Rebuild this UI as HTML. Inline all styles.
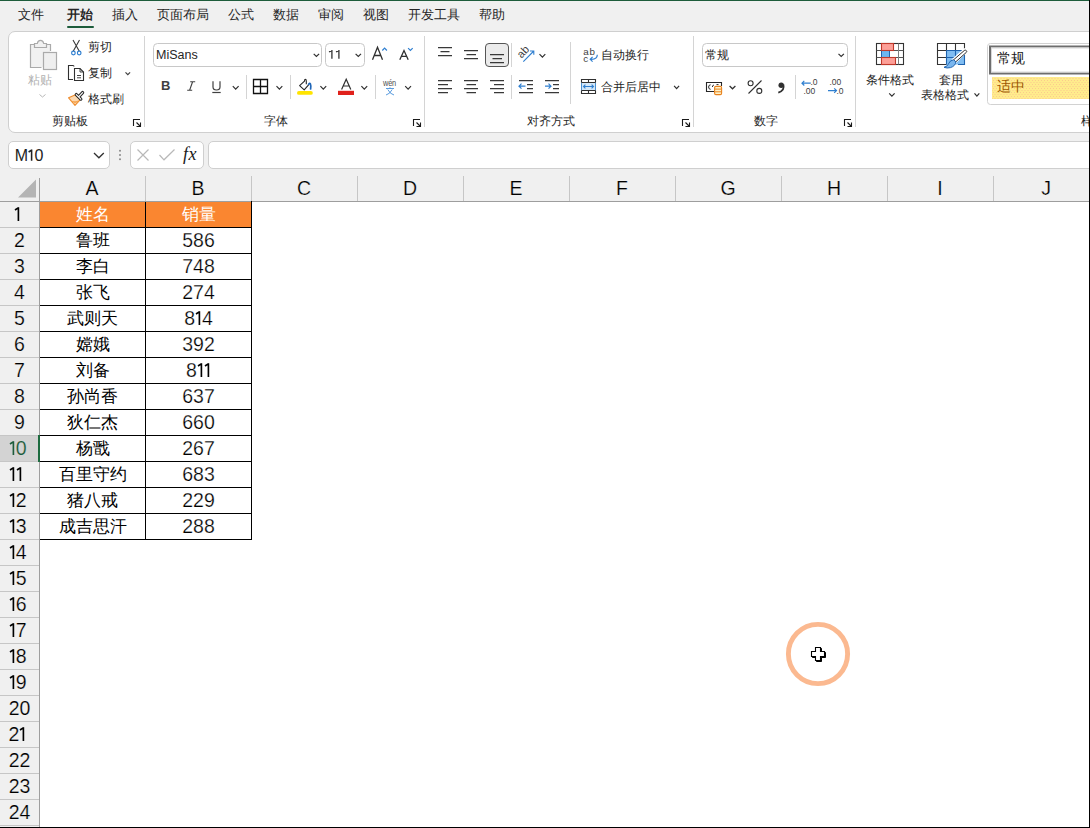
<!DOCTYPE html>
<html><head><meta charset="utf-8">
<style>
*{margin:0;padding:0;box-sizing:border-box}
html,body{width:1090px;height:828px;overflow:hidden;background:#f0f0f0;font-family:"Liberation Sans",sans-serif;color:#262626;position:relative}
.a{position:absolute}
.tab{position:absolute;top:6px;font-size:12.8px;line-height:18px;color:#262626;white-space:nowrap}
#ribbon{position:absolute;left:8px;top:31px;width:1100px;height:102px;background:#fff;border:1px solid #cfcfcf;border-radius:7px}
.t{position:absolute;font-size:12.2px;line-height:14px;white-space:nowrap;color:#262626}
.sep{position:absolute;width:1px;background:#d6d6d6}
.box{position:absolute;background:#fff;border:1px solid #c8c8c8;border-radius:4px}
.chev{position:absolute;width:5px;height:5px;border-right:1.2px solid #444;border-bottom:1.2px solid #444;transform:rotate(45deg)}
.colh{position:absolute;top:176px;height:25px;font-size:19.5px;line-height:24px;text-align:center;color:#000;-webkit-text-stroke:0.2px #f0f0f0}
.rowh{position:absolute;left:0;width:39px;height:25px;font-size:19.5px;line-height:24px;text-align:center;color:#000;-webkit-text-stroke:0.2px #f0f0f0}
.rowh.sel{background:#d3d3d3;color:#1d5c3b}
.hdr{position:absolute;height:25px;font-size:17px;line-height:25px;text-align:center;color:#fff}
.cv{position:absolute;height:25px;font-size:17px;line-height:25px;text-align:center;color:#000}
.num{font-size:19.5px;line-height:24px;-webkit-text-stroke:0.25px #fff}

.dg{position:absolute;height:25px;font-size:19.5px;line-height:24px;color:#000;-webkit-text-stroke:0.2px #f0f0f0;white-space:nowrap}
.dg.sel{color:#1d5c3b;-webkit-text-stroke:0.2px #d3d3d3}
.dgv{position:absolute;height:25px;font-size:19.5px;line-height:24px;color:#000;-webkit-text-stroke:0.25px #fff;white-space:nowrap}

</style></head><body>
<div class="a" style="left:0;top:0;width:1090px;height:1px;background:#1d5c3b"></div>
<div class="tab" style="left:18px">文件</div>
<div class="tab" style="left:67px;font-weight:bold">开始</div>
<div class="a" style="left:67px;top:26px;width:27px;height:2px;background:#1d5c3b;border-radius:1px"></div>
<div class="tab" style="left:112px">插入</div>
<div class="tab" style="left:157px">页面布局</div>
<div class="tab" style="left:228px">公式</div>
<div class="tab" style="left:273px">数据</div>
<div class="tab" style="left:318px">审阅</div>
<div class="tab" style="left:363px">视图</div>
<div class="tab" style="left:408px">开发工具</div>
<div class="tab" style="left:479px">帮助</div>
<div id="ribbon"></div>
<svg class="a" style="left:0;top:0" width="1090" height="176" fill="none" stroke-linecap="butt">
<!-- separators -->
<g stroke="#d4d4d4" stroke-width="1">
<path d="M144.5 36V127M424.5 36V127M693.5 36V127M855.5 36V127"/>
<path d="M246.5 75V99M290.5 75V99M375.5 75V99"/>
<path d="M511.5 43V67M511.5 75V99M570.5 42V104"/>
<path d="M795.5 75V99"/>
</g>
<!-- launchers -->
<g stroke="#1a1a1a" stroke-width="1.1">
<path id="ln" d="M413.5 126V119.5H420M416.5 122.5L420.5 126.5M420.5 122.5V126.5H416.5"/>
<use href="#ln" x="-280"/><use href="#ln" x="269"/><use href="#ln" x="431"/>
</g>
<!-- paste -->
<g stroke="#aaaaaa" stroke-width="1.2">
<rect x="31" y="45" width="19" height="22" fill="#f1f1f1" stroke="none"/>
<path d="M41.5 67.5H30.5V44.5H50.5V51"/>
<path d="M34.5 47.5V43.5H37.3Q37.8 40.3 40.5 40.3Q43.2 40.3 43.7 43.5H46.5V47.5Z" fill="#f1f1f1"/>
<rect x="43.5" y="52.5" width="13" height="17" fill="#efefef"/>
<path d="M39.5 94.5L42.5 97L45.5 94.5" stroke="#b8b8b8" stroke-width="1"/>
</g>
<!-- scissors -->
<path d="M73 40L79.3 51.3M79.5 40L73.2 51.3" stroke="#3a3a3a" stroke-width="1.1"/>
<circle cx="73.4" cy="53" r="1.8" stroke="#2f7fd0" stroke-width="1.2" fill="#fff"/>
<circle cx="79.2" cy="53" r="1.8" stroke="#2f7fd0" stroke-width="1.2" fill="#fff"/>
<!-- copy -->
<g stroke="#303030" stroke-width="1.1">
<path d="M74 66.5Q74 65.5 73 65.5H68.5V79.5H73"/>
<path d="M74.5 68.5H80L83.5 72V80.5H74.5Z" fill="#fff"/>
<path d="M80 68.5V72H83.5" stroke-width="0.9"/>
<path d="M77 75.5H81M77 77.8H81" stroke-width="0.9"/>
<path d="M125.5 72.3L127.8 74.6L130.1 72.3" stroke="#404040" stroke-width="1.2"/>
</g>
<!-- format painter -->
<path d="M75.5 94.8L68.6 97.8L75 105.3L80.3 99.6Z" fill="#fdd9b0" stroke="#ee8b2c" stroke-width="1.1" stroke-linejoin="round"/>
<path d="M71.5 101.5L78 102M73 103.5L78.5 100.8" stroke="#f6a24a" stroke-width="1"/>
<path d="M76.3 94.6L80.8 99.1M78.6 96.8L82.6 92.6" stroke="#2a2a2a" stroke-width="3.3" stroke-linecap="round"/>
<path d="M76.3 94.6L80.8 99.1M78.6 96.8L82.6 92.6" stroke="#fff" stroke-width="1.2" stroke-linecap="round"/>
<!-- font box -->
<rect x="153.5" y="43.5" width="168" height="23" rx="4" fill="#fff" stroke="#c8c8c8"/>
<rect x="325.5" y="43.5" width="39" height="23" rx="4" fill="#fff" stroke="#c8c8c8"/>
<g stroke="#303030" stroke-width="1.2">
<path d="M313.7 53.8L316.4 56.5L319.1 53.8"/>
<path d="M355.6 53.8L358.3 56.5L361 53.8"/>
<path d="M232.8 86.2L235.7 89.1L238.6 86.2"/>
<path d="M276.5 86.2L279.4 89.1L282.3 86.2"/>
<path d="M320.4 86.2L323.3 89.1L326.2 86.2"/>
<path d="M361.4 86.2L364.3 89.1L367.2 86.2"/>
<path d="M405.2 86.2L408.1 89.1L411 86.2"/>
<path d="M539.5 54.2L542.4 57.1L545.3 54.2"/>
<path d="M674.1 85.8L676.6 88.6L679.1 85.8"/>
<path d="M729.6 86L732.5 88.8L735.4 86"/>
<path d="M889.2 93.3L891.9 96.1L894.6 93.3"/>
<path d="M974.5 93.3L976.9 96.1L979.3 93.3"/>
</g>
<!-- A grow/shrink -->
<path d="M372.5 59.8L377.5 47.3L382.5 59.8M374.2 55.5H380.8" stroke="#303030" stroke-width="1.3"/>
<path d="M382.3 50.5L384.6 48.2L386.9 50.5" stroke="#2f7fd0" stroke-width="1.2"/>
<path d="M399.8 59.8L404 50.5L408.2 59.8M401.3 56.3H406.7" stroke="#303030" stroke-width="1.3"/>
<path d="M408.1 48.2L410.4 50.5L412.7 48.2" stroke="#2f7fd0" stroke-width="1.2"/>
<path d="M192.6 81.8L189.6 90.3M190.2 81.8H195.2M187.2 90.3H192.2" stroke="#404040" stroke-width="1.1"/>
<!-- U underline -->
<path d="M213 81.3V87Q213 90 216.5 90Q220 90 220 87V81.3" stroke="#404040" stroke-width="1.2"/>
<path d="M212.3 92.5H220.7" stroke="#404040" stroke-width="1.2"/>
<!-- border icon -->
<path d="M253.5 79.5H267.5V93.5H253.5ZM260.5 79.5V93.5M253.5 86.5H267.5" stroke="#111" stroke-width="1.3"/>
<!-- fill color -->
<path d="M306.3 84.3V81Q306.3 79.4 305.4 79.4Q304.5 79.4 304.5 81V81.2L299.6 85.6L304.2 89.8L308.6 84.8" stroke="#262626" stroke-width="1.1" fill="#fff" stroke-linejoin="round"/>
<path d="M308.6 84.3Q309.6 82.4 310.4 84Q311.2 85.8 310.6 89" stroke="#1f66b8" stroke-width="1.7" stroke-linecap="round"/>
<rect x="297" y="91" width="15.8" height="3.8" rx="1.9" fill="#ffe400"/>
<!-- font color -->
<path d="M341.6 89.5L346.2 79.2L350.8 89.5M343.2 86H349.2" stroke="#303030" stroke-width="1.2"/>
<rect x="338" y="90.8" width="16" height="4.2" fill="#e0211b"/>
<!-- pinyin -->
<path d="M386 88.5H394M390 87.3V88.5M387.8 89.5Q390 94 394 95M392.2 89.5Q390 94 386 95" stroke="#3d8ad8" stroke-width="0.85"/>
<!-- align top/middle/bottom -->
<g stroke="#383838" stroke-width="1.25">
<path d="M438 47.5H452M440.5 51.5H449.5M438 55.5H452"/>
<path d="M464 50.5H478M466.5 54.5H476M464 58.5H478"/>
<rect x="485.5" y="43.5" width="23" height="23" rx="3.5" fill="#ebebeb" stroke="#555" stroke-width="1"/>
<path d="M490 54.5H504M492.5 58.5H502M490 62.5H504"/>
<path d="M438 80.5H452M438 84.5H448M438 88.5H452M438 92.5H448"/>
<path d="M464 80.5H478M466.5 84.5H476M464 88.5H478M466.5 92.5H476"/>
<path d="M490 80.5H504M494 84.5H504M490 88.5H504M494 92.5H504"/>
<path d="M519 80.5H533M527 84.5H533M527 88.5H533M519 92.5H533"/>
<path d="M545 80.5H559M553 84.5H559M553 88.5H559M545 92.5H559"/>
</g>
<g stroke="#2f7fd0" stroke-width="1.2">
<path d="M519 86.2H525.5M521.5 83.7L519 86.2L521.5 88.7"/>
<path d="M545 86.2H551M548.5 83.7L551 86.2L548.5 88.7"/>
<path d="M523.3 61.6L533.8 51M530 51H533.8V54.8" stroke-width="1.1"/>
</g>
<!-- wrap text arrow -->
<path d="M597.3 54.8Q597.3 59.3 591.5 59.3H590.3M592.6 56.9L590.2 59.3L592.6 61.7" stroke="#2f7fd0" stroke-width="1.2"/>
<!-- merge icon -->
<rect x="582" y="82.5" width="13" height="8" fill="#d3e7f8"/>
<path d="M581.5 82.5V90.5M595.5 82.5V90.5" stroke="#4a90d0" stroke-width="1"/>
<path d="M581.5 82.5V79.5H595.5V82.5M581.5 90.5V93.5H595.5V90.5M581.5 82.5H595.5M581.5 90.5H595.5M588.5 79.5V82.5M588.5 90.5V93.5" stroke="#303030" stroke-width="1.1"/>
<path d="M583.5 86.5H593.5M585.4 84.6L583.5 86.5L585.4 88.4M591.6 84.6L593.5 86.5L591.6 88.4" stroke="#2f7fd0" stroke-width="1.1"/>
<!-- number format box -->
<rect x="702.5" y="43.5" width="145" height="23" rx="4" fill="#fff" stroke="#c8c8c8"/>
<path d="M838.5 53.8L841.2 56.5L843.9 53.8" stroke="#303030" stroke-width="1.2"/>
<!-- accounting -->
<path d="M714 91.5H706.5V82.5H721.5V86" stroke="#262626" stroke-width="1.1"/>
<path d="M710.6 84.8Q708.6 84.8 708.6 87Q708.6 89.3 710.6 89.3M713.9 85Q712.4 85.2 712.4 87M716.5 84.6H718.5" stroke="#262626" stroke-width="1"/>
<rect x="714.6" y="86.4" width="7" height="8.2" rx="1.3" fill="#fff3c8" stroke="#e8821e" stroke-width="1.1"/>
<path d="M714.6 89.1H721.6M714.6 91.8H721.6" stroke="#e8821e" stroke-width="1"/>
<!-- percent -->
<circle cx="750.6" cy="83.2" r="2.5" stroke="#303030" stroke-width="1.1"/>
<circle cx="759.3" cy="90.9" r="2.5" stroke="#303030" stroke-width="1.1"/>
<path d="M748.5 93.5L761.5 80.5" stroke="#303030" stroke-width="1.1"/>
<!-- comma -->
<circle cx="781.2" cy="85.3" r="2.7" fill="#303030"/>
<path d="M783.4 84.5Q785 90.5 778.3 92.6" stroke="#303030" stroke-width="1.7"/>
<!-- decimals arrows -->
<path d="M802 83.2H810.8M804.3 80.9L802 83.2L804.3 85.5" stroke="#2f7fd0" stroke-width="1.2"/>
<path d="M828 90.6H836.5M834.2 88.3L836.5 90.6L834.2 92.9" stroke="#2f7fd0" stroke-width="1.2"/>
<!-- conditional formatting -->
<rect x="876.5" y="43.5" width="27" height="21" fill="#fff" stroke="#333" stroke-width="1.1"/>
<path d="M876.5 50.5H903.5M876.5 57.5H903.5" stroke="#555" stroke-width="1"/>
<path d="M898.5 43.5V64.5" stroke="#808080" stroke-width="1"/>
<rect x="881.5" y="50.5" width="8" height="7" fill="#6cb6f2"/>
<path d="M881.5 50.5V57.5M889.5 50.5V57.5" stroke="#1f64b0" stroke-width="1"/>
<rect x="881.5" y="43.5" width="12" height="7" fill="#fd9f97" stroke="#c0392b" stroke-width="1.1"/>
<rect x="881.5" y="57.5" width="14" height="7" fill="#fd9f97" stroke="#c0392b" stroke-width="1.1"/>
<!-- format as table -->
<rect x="937" y="43" width="28" height="22" fill="#fff"/>
<rect x="946.5" y="50.5" width="18" height="14" fill="#80bdf2"/>
<path d="M946.5 64.5H937.5V43.5H964.5V49M937.5 50.5H946.5M937.5 57.5H946.5M946.5 43.5V50.5M955.5 43.5V50.5" stroke="#333" stroke-width="1.1"/>
<path d="M946.5 50.5H962M946.5 57.5H956M946.5 50.5V64.5M955.5 50.5V58M964.5 55V64.5H958" stroke="#1f64b0" stroke-width="1.1"/>
<path d="M967 50.2L955.2 62.3L952.8 60L964.8 49.3Z" stroke="#fff" stroke-width="2.4" fill="#fff" stroke-linejoin="round"/>
<path d="M966.3 50.6Q967.2 51.6 966.3 52.4L955.8 61.8L953.6 59.8L964.3 50.5Q965.4 49.7 966.3 50.6Z" fill="#fff" stroke="#303030" stroke-width="1"/>
<path d="M955.8 61.8Q955.5 66 950.5 67.6Q947 68.5 944 67.3Q947.6 66.5 948.6 63.6Q950 60.2 953.6 59.8Z" fill="#7ab6ee" stroke="#1f64b0" stroke-width="1"/>
<!-- styles gallery -->
<rect x="987.5" y="43.5" width="120" height="61" rx="3" fill="#fff" stroke="#d2d2d2"/>
<rect x="990" y="46.5" width="120" height="27" fill="#fff" stroke="#6e6e6e" stroke-width="2"/>
<rect x="991.5" y="48" width="120" height="24" fill="none" stroke="#d8d8d8" stroke-width="1"/>
<defs><pattern id="dots" x="0" y="0" width="3" height="4" patternUnits="userSpaceOnUse"><rect width="3" height="4" fill="#ffec8c"/><rect x="0" y="0" width="1" height="1" fill="#fcc98e"/><rect x="1.5" y="2" width="1" height="1" fill="#fcc98e"/></pattern></defs>
<rect x="992" y="77" width="110" height="22" fill="url(#dots)"/>
<!-- formula bar boxes -->
<rect x="8.5" y="141.5" width="101" height="27" rx="4.5" fill="#fff" stroke="#cfcfcf"/>
<rect x="130.5" y="141.5" width="73" height="27" rx="4.5" fill="#fff" stroke="#cfcfcf"/>
<rect x="208.5" y="141.5" width="900" height="27" rx="4.5" fill="#fff" stroke="#cfcfcf"/>
<path d="M94 153L98.9 157.8L103.8 153" stroke="#303030" stroke-width="1.3"/>
<g fill="#8a8a8a"><circle cx="120" cy="150.8" r="1"/><circle cx="120" cy="155" r="1"/><circle cx="120" cy="159.2" r="1"/></g>
<path d="M137.5 149.5L148.5 160.5M148.5 149.5L137.5 160.5" stroke="#b8b8b8" stroke-width="1.2"/>
<path d="M159.5 155L164 159.8L174.5 149.5" stroke="#b8b8b8" stroke-width="1.2"/>
<!-- extra text glyphs -->
<g font-family="Liberation Sans" fill="#404040">
<text x="0" y="0" font-size="11px" transform="translate(521.5,58.8) rotate(-47)">ab</text>
<text x="583.3" y="55.4" font-size="9.8px" letter-spacing="0.8">ab</text>
<text x="583.3" y="62.2" font-size="9.8px">c</text>
<text x="810.5" y="85.4" font-size="8.5px">.0</text>
<text x="803.5" y="93.5" font-size="8.5px">.00</text>
<text x="829.5" y="85.4" font-size="8.5px">.00</text>
<text x="836.5" y="93.5" font-size="8.5px">.0</text>
</g>
<!-- custom ones -->
<path d="M331.9 50V58.8M332.3 50.6L329 51.8M338.9 50V58.8M339.3 50.6L336 51.8" stroke="#3a3a3a" stroke-width="1.35"/>
<path d="M31.6 149.4V160.8M31.9 150L28.6 152" stroke="#222" stroke-width="1.55"/>
</svg>
<!-- labels -->
<div class="t" style="left:28px;top:73px;color:#b0b0b0">粘贴</div>
<div class="t" style="left:88px;top:40px">剪切</div>
<div class="t" style="left:88px;top:66px">复制</div>
<div class="t" style="left:88px;top:92px">格式刷</div>
<div class="t" style="left:52px;top:114px">剪贴板</div>
<div class="t" style="left:156px;top:48px;font-family:'Liberation Sans';font-size:12.5px">MiSans</div>
<div class="t" style="left:161px;top:79px;font-weight:bold;font-size:13px;color:#404040">B</div>
<div class="t" style="left:382.5px;top:75.5px;font-size:8.6px;color:#505050;transform:scaleX(0.86);transform-origin:0 0;letter-spacing:-0.2px">wén</div>
<div class="t" style="left:264px;top:114px">字体</div>
<div class="t" style="left:601px;top:48px">自动换行</div>
<div class="t" style="left:601px;top:80px">合并后居中</div>
<div class="t" style="left:527px;top:114px">对齐方式</div>
<div class="t" style="left:705px;top:48px">常规</div>
<div class="t" style="left:754px;top:114px">数字</div>
<div class="t" style="left:866px;top:73px">条件格式</div>
<div class="t" style="left:939px;top:73px">套用</div>
<div class="t" style="left:921px;top:88px">表格格式</div>
<div class="t" style="left:997px;top:51px;font-size:14px;color:#1a1a1a">常规</div>
<div class="t" style="left:997px;top:79px;font-size:14px;color:#9c5700">适中</div>
<div class="t" style="left:1081px;top:114px">样</div>
<div class="t" style="left:14.7px;top:148.3px;font-family:'Liberation Sans';font-size:16px;line-height:16px;color:#222">M</div>
<div class="t" style="left:34.6px;top:148.3px;font-family:'Liberation Sans';font-size:16px;line-height:16px;color:#222">0</div>
<div class="t" style="left:183px;top:145px;font-family:'Liberation Serif';font-style:italic;font-size:18px;line-height:18px;color:#202020;letter-spacing:0.5px">fx</div>
<div class="a" style="left:0;top:176px;width:1090px;height:652px;background:#fff"></div>
<div class="a" style="left:0;top:176px;width:1090px;height:25px;background:#f0f0f0"></div>
<div class="a" style="left:0;top:201px;width:39px;height:627px;background:#f0f0f0"></div>
<svg class="a" style="left:0;top:176px" width="39" height="25"><path d="M36 3.5 L36 21.5 L18 21.5 Z" fill="#b4b4b4"/></svg>
<div class="colh" style="left:39px;width:106px">A</div>
<div class="a" style="left:145px;top:176px;width:1px;height:25px;background:#c6c6c6"></div>
<div class="colh" style="left:145px;width:106px">B</div>
<div class="a" style="left:251px;top:176px;width:1px;height:25px;background:#c6c6c6"></div>
<div class="colh" style="left:251px;width:106px">C</div>
<div class="a" style="left:357px;top:176px;width:1px;height:25px;background:#c6c6c6"></div>
<div class="colh" style="left:357px;width:106px">D</div>
<div class="a" style="left:463px;top:176px;width:1px;height:25px;background:#c6c6c6"></div>
<div class="colh" style="left:463px;width:106px">E</div>
<div class="a" style="left:569px;top:176px;width:1px;height:25px;background:#c6c6c6"></div>
<div class="colh" style="left:569px;width:106px">F</div>
<div class="a" style="left:675px;top:176px;width:1px;height:25px;background:#c6c6c6"></div>
<div class="colh" style="left:675px;width:106px">G</div>
<div class="a" style="left:781px;top:176px;width:1px;height:25px;background:#c6c6c6"></div>
<div class="colh" style="left:781px;width:106px">H</div>
<div class="a" style="left:887px;top:176px;width:1px;height:25px;background:#c6c6c6"></div>
<div class="colh" style="left:887px;width:106px">I</div>
<div class="a" style="left:993px;top:176px;width:1px;height:25px;background:#c6c6c6"></div>
<div class="colh" style="left:993px;width:106px">J</div>
<div class="a" style="left:1099px;top:176px;width:1px;height:25px;background:#c6c6c6"></div>
<div class="a" style="left:39px;top:178px;width:1px;height:650px;background:#9e9e9e"></div>
<div class="a" style="left:0;top:201px;width:1090px;height:1px;background:#9e9e9e"></div>
<svg class="a" style="left:13.50px;top:201px" width="8" height="26"><path d="M4.4 6.2V20.1M4.6 6.6L1 9" stroke="#000" stroke-width="1.65" fill="none"/></svg>
<div class="a" style="left:0;top:227px;width:39px;height:1px;background:#c6c6c6"></div>
<div class="rowh" style="top:228px">2</div>
<div class="a" style="left:0;top:253px;width:39px;height:1px;background:#c6c6c6"></div>
<div class="rowh" style="top:254px">3</div>
<div class="a" style="left:0;top:279px;width:39px;height:1px;background:#c6c6c6"></div>
<div class="rowh" style="top:280px">4</div>
<div class="a" style="left:0;top:305px;width:39px;height:1px;background:#c6c6c6"></div>
<div class="rowh" style="top:306px">5</div>
<div class="a" style="left:0;top:331px;width:39px;height:1px;background:#c6c6c6"></div>
<div class="rowh" style="top:332px">6</div>
<div class="a" style="left:0;top:357px;width:39px;height:1px;background:#c6c6c6"></div>
<div class="rowh" style="top:358px">7</div>
<div class="a" style="left:0;top:383px;width:39px;height:1px;background:#c6c6c6"></div>
<div class="rowh" style="top:384px">8</div>
<div class="a" style="left:0;top:409px;width:39px;height:1px;background:#c6c6c6"></div>
<div class="rowh" style="top:410px">9</div>
<div class="a" style="left:0;top:435px;width:39px;height:1px;background:#c6c6c6"></div>
<div class="rowh sel" style="top:436px"></div>
<svg class="a" style="left:8.70px;top:435px" width="8" height="26"><path d="M4.4 6.2V20.1M4.6 6.6L1 9" stroke="#1d5c3b" stroke-width="1.65" fill="none"/></svg><div class="dg sel" style="left:15.70px;top:436px;width:10.842px;text-align:left">0</div>
<div class="a" style="left:0;top:461px;width:39px;height:1px;background:#c6c6c6"></div>
<svg class="a" style="left:8.70px;top:461px" width="8" height="26"><path d="M4.4 6.2V20.1M4.6 6.6L1 9" stroke="#000" stroke-width="1.65" fill="none"/></svg><svg class="a" style="left:15.70px;top:461px" width="8" height="26"><path d="M4.4 6.2V20.1M4.6 6.6L1 9" stroke="#000" stroke-width="1.65" fill="none"/></svg>
<div class="a" style="left:0;top:487px;width:39px;height:1px;background:#c6c6c6"></div>
<svg class="a" style="left:8.70px;top:487px" width="8" height="26"><path d="M4.4 6.2V20.1M4.6 6.6L1 9" stroke="#000" stroke-width="1.65" fill="none"/></svg><div class="dg" style="left:15.70px;top:488px;width:10.842px;text-align:left">2</div>
<div class="a" style="left:0;top:513px;width:39px;height:1px;background:#c6c6c6"></div>
<svg class="a" style="left:8.70px;top:513px" width="8" height="26"><path d="M4.4 6.2V20.1M4.6 6.6L1 9" stroke="#000" stroke-width="1.65" fill="none"/></svg><div class="dg" style="left:15.70px;top:514px;width:10.842px;text-align:left">3</div>
<div class="a" style="left:0;top:539px;width:39px;height:1px;background:#c6c6c6"></div>
<svg class="a" style="left:8.70px;top:539px" width="8" height="26"><path d="M4.4 6.2V20.1M4.6 6.6L1 9" stroke="#000" stroke-width="1.65" fill="none"/></svg><div class="dg" style="left:15.70px;top:540px;width:10.842px;text-align:left">4</div>
<div class="a" style="left:0;top:565px;width:39px;height:1px;background:#c6c6c6"></div>
<svg class="a" style="left:8.70px;top:565px" width="8" height="26"><path d="M4.4 6.2V20.1M4.6 6.6L1 9" stroke="#000" stroke-width="1.65" fill="none"/></svg><div class="dg" style="left:15.70px;top:566px;width:10.842px;text-align:left">5</div>
<div class="a" style="left:0;top:591px;width:39px;height:1px;background:#c6c6c6"></div>
<svg class="a" style="left:8.70px;top:591px" width="8" height="26"><path d="M4.4 6.2V20.1M4.6 6.6L1 9" stroke="#000" stroke-width="1.65" fill="none"/></svg><div class="dg" style="left:15.70px;top:592px;width:10.842px;text-align:left">6</div>
<div class="a" style="left:0;top:617px;width:39px;height:1px;background:#c6c6c6"></div>
<svg class="a" style="left:8.70px;top:617px" width="8" height="26"><path d="M4.4 6.2V20.1M4.6 6.6L1 9" stroke="#000" stroke-width="1.65" fill="none"/></svg><div class="dg" style="left:15.70px;top:618px;width:10.842px;text-align:left">7</div>
<div class="a" style="left:0;top:643px;width:39px;height:1px;background:#c6c6c6"></div>
<svg class="a" style="left:8.70px;top:643px" width="8" height="26"><path d="M4.4 6.2V20.1M4.6 6.6L1 9" stroke="#000" stroke-width="1.65" fill="none"/></svg><div class="dg" style="left:15.70px;top:644px;width:10.842px;text-align:left">8</div>
<div class="a" style="left:0;top:669px;width:39px;height:1px;background:#c6c6c6"></div>
<svg class="a" style="left:8.70px;top:669px" width="8" height="26"><path d="M4.4 6.2V20.1M4.6 6.6L1 9" stroke="#000" stroke-width="1.65" fill="none"/></svg><div class="dg" style="left:15.70px;top:670px;width:10.842px;text-align:left">9</div>
<div class="a" style="left:0;top:695px;width:39px;height:1px;background:#c6c6c6"></div>
<div class="rowh" style="top:696px">20</div>
<div class="a" style="left:0;top:721px;width:39px;height:1px;background:#c6c6c6"></div>
<div class="dg" style="left:8.60px;top:722px;width:10.842px;text-align:left">2</div><svg class="a" style="left:19.44px;top:721px" width="8" height="26"><path d="M4.4 6.2V20.1M4.6 6.6L1 9" stroke="#000" stroke-width="1.65" fill="none"/></svg>
<div class="a" style="left:0;top:747px;width:39px;height:1px;background:#c6c6c6"></div>
<div class="rowh" style="top:748px">22</div>
<div class="a" style="left:0;top:773px;width:39px;height:1px;background:#c6c6c6"></div>
<div class="rowh" style="top:774px">23</div>
<div class="a" style="left:0;top:799px;width:39px;height:1px;background:#c6c6c6"></div>
<div class="rowh" style="top:800px">24</div>
<div class="a" style="left:0;top:825px;width:39px;height:1px;background:#c6c6c6"></div>
<div class="a" style="left:38px;top:435px;width:2px;height:27px;background:#1d6b3f"></div>
<div class="a" style="left:40px;top:202px;width:211px;height:25px;background:#fa8630"></div>
<div class="hdr" style="left:40px;top:202px;width:105px">姓名</div>
<div class="hdr" style="left:146px;top:202px;width:105px">销量</div>
<div class="cv" style="left:40px;top:228px;width:105px">鲁班</div>
<div class="cv num" style="left:146px;top:228px;width:105px">586</div>
<div class="cv" style="left:40px;top:254px;width:105px">李白</div>
<div class="cv num" style="left:146px;top:254px;width:105px">748</div>
<div class="cv" style="left:40px;top:280px;width:105px">张飞</div>
<div class="cv num" style="left:146px;top:280px;width:105px">274</div>
<div class="cv" style="left:40px;top:306px;width:105px">武则天</div>
<div class="dgv" style="left:184.16px;top:306px;width:10.842px;text-align:left">8</div><svg class="a" style="left:195.00px;top:305px" width="8" height="26"><path d="M4.4 6.2V20.1M4.6 6.6L1 9" stroke="#000" stroke-width="1.65" fill="none"/></svg><div class="dgv" style="left:202.00px;top:306px;width:10.842px;text-align:left">4</div>
<div class="cv" style="left:40px;top:332px;width:105px">嫦娥</div>
<div class="cv num" style="left:146px;top:332px;width:105px">392</div>
<div class="cv" style="left:40px;top:358px;width:105px">刘备</div>
<div class="dgv" style="left:186.08px;top:358px;width:10.842px;text-align:left">8</div><svg class="a" style="left:196.92px;top:357px" width="8" height="26"><path d="M4.4 6.2V20.1M4.6 6.6L1 9" stroke="#000" stroke-width="1.65" fill="none"/></svg><svg class="a" style="left:203.92px;top:357px" width="8" height="26"><path d="M4.4 6.2V20.1M4.6 6.6L1 9" stroke="#000" stroke-width="1.65" fill="none"/></svg>
<div class="cv" style="left:40px;top:384px;width:105px">孙尚香</div>
<div class="cv num" style="left:146px;top:384px;width:105px">637</div>
<div class="cv" style="left:40px;top:410px;width:105px">狄仁杰</div>
<div class="cv num" style="left:146px;top:410px;width:105px">660</div>
<div class="cv" style="left:40px;top:436px;width:105px">杨戬</div>
<div class="cv num" style="left:146px;top:436px;width:105px">267</div>
<div class="cv" style="left:40px;top:462px;width:105px">百里守约</div>
<div class="cv num" style="left:146px;top:462px;width:105px">683</div>
<div class="cv" style="left:40px;top:488px;width:105px">猪八戒</div>
<div class="cv num" style="left:146px;top:488px;width:105px">229</div>
<div class="cv" style="left:40px;top:514px;width:105px">成吉思汗</div>
<div class="cv num" style="left:146px;top:514px;width:105px">288</div>
<div class="a" style="left:40px;top:227px;width:212px;height:1px;background:#000"></div>
<div class="a" style="left:40px;top:253px;width:212px;height:1px;background:#000"></div>
<div class="a" style="left:40px;top:279px;width:212px;height:1px;background:#000"></div>
<div class="a" style="left:40px;top:305px;width:212px;height:1px;background:#000"></div>
<div class="a" style="left:40px;top:331px;width:212px;height:1px;background:#000"></div>
<div class="a" style="left:40px;top:357px;width:212px;height:1px;background:#000"></div>
<div class="a" style="left:40px;top:383px;width:212px;height:1px;background:#000"></div>
<div class="a" style="left:40px;top:409px;width:212px;height:1px;background:#000"></div>
<div class="a" style="left:40px;top:435px;width:212px;height:1px;background:#000"></div>
<div class="a" style="left:40px;top:461px;width:212px;height:1px;background:#000"></div>
<div class="a" style="left:40px;top:487px;width:212px;height:1px;background:#000"></div>
<div class="a" style="left:40px;top:513px;width:212px;height:1px;background:#000"></div>
<div class="a" style="left:40px;top:539px;width:212px;height:1px;background:#000"></div>
<div class="a" style="left:40px;top:539px;width:212px;height:1px;background:#000"></div>
<div class="a" style="left:145px;top:227px;width:1px;height:313px;background:#000"></div>
<div class="a" style="left:251px;top:201px;width:1px;height:339px;background:#000"></div>
<div class="a" style="left:145px;top:202px;width:1px;height:25px;background:#000"></div>
<svg class="a" style="left:780px;top:616px" width="76" height="76"><circle cx="38" cy="38" r="29.6" fill="none" stroke="#fbb990" stroke-width="4.9"/>
<path d="M35.5 31.5H40.5V35.5H44.5V40.5H40.5V44.5H35.5V40.5H31.5V35.5H35.5Z" fill="#000" stroke="#000" stroke-width="1" transform="translate(1,1)"/>
<path d="M35.5 31.5H40.5V35.5H44.5V40.5H40.5V44.5H35.5V40.5H31.5V35.5H35.5Z" fill="#fff" stroke="#000" stroke-width="1.1"/></svg>
<div class="a" style="left:1089px;top:0;width:1px;height:828px;background:#000"></div>
<div class="a" style="left:0;top:827px;width:1090px;height:1px;background:#000"></div>
</body></html>
